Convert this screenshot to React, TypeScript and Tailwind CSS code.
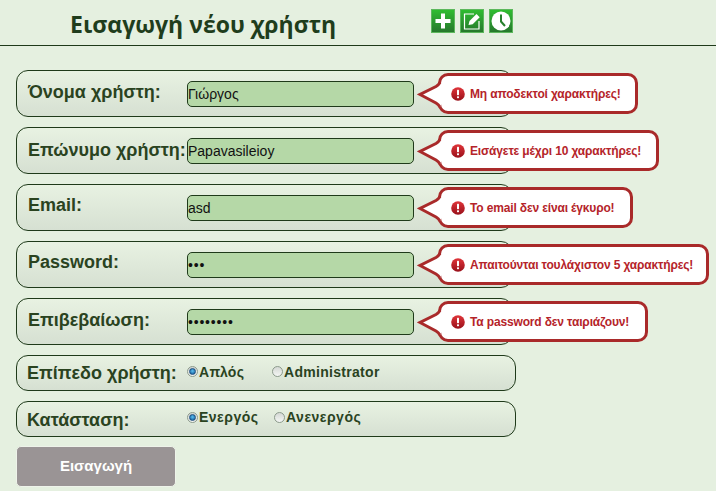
const rows = [
  { label: "Όνομα χρήστη:", value: "Γιώργος", msg: "Μη αποδεκτοί χαρακτήρες!", w: "w-[221px]", lt: "-mt-[3px]", pw: false },
  { label: "Επώνυμο χρήστη:", value: "Papavasileioy", msg: "Εισάγετε μέχρι 10 χαρακτήρες!", w: "w-[242px]", lt: "-mt-[1px]", pw: false },
  { label: "Email:", value: "asd", msg: "Το email δεν είναι έγκυρο!", w: "w-[216px]", lt: "-mt-[5px]", pw: false },
  { label: "Password:", value: "•••", msg: "Απαιτούνται τουλάχιστον 5 χαρακτήρες!", w: "w-[292px]", lt: "-mt-[5px]", pw: true },
  { label: "Επιβεβαίωση:", value: "••••••••", msg: "Τα password δεν ταιριάζουν!", w: "w-[231px]", lt: "-mt-[2px]", pw: true },
];

function Bubble({ msg, w }: { msg: string; w: string }) {
  return (
    <div className={`absolute left-[400px] top-[2px] h-[41px] ${w}`}>
      <div className="absolute left-[21px] right-0 top-0 bottom-0 flex items-center rounded-[10px] border-[3px] border-[#a92a2a] bg-white pl-[10px] text-[12px] font-bold tracking-[-0.15px] whitespace-nowrap text-[#b5242a]">
        <svg className="mr-[5px] shrink-0" width="14" height="14" viewBox="0 0 14 14">
          <defs>
            <linearGradient id="err" x1="0" y1="0" x2="0" y2="1">
              <stop offset="0" stopColor="#e0353a" />
              <stop offset="1" stopColor="#98101a" />
            </linearGradient>
          </defs>
          <circle cx="7" cy="7" r="6.8" fill="url(#err)" />
          <rect x="6" y="2.8" width="2" height="5.4" rx="0.6" fill="#fff" />
          <rect x="6" y="9.2" width="2" height="2" rx="0.6" fill="#fff" />
        </svg>
        <span>{msg}</span>
      </div>
      <svg className="absolute left-0 top-0" width="26" height="41" viewBox="0 0 26 41">
        <path d="M24 10 Q22 12 19 13.5 L3 21.5 L19 30 Q22 31.5 24 34 Z" fill="#fff" />
        <path d="M23 9.5 Q21.5 12 19 13.5 L3 21.5 L19 30 Q21.5 31.5 23 34" fill="none" stroke="#a92a2a" strokeWidth="3" />
      </svg>
    </div>
  );
}

function Radio({ checked }: { checked?: boolean }) {
  return (
    <span className="mr-px flex size-[11px] shrink-0 items-center justify-center rounded-full border border-[#8c9a8c] bg-gradient-to-b from-[#d4d8d4] to-[#f4f6f4]">
      {checked && <span className="size-[7px] rounded-full border border-[#1f4f80] bg-[radial-gradient(circle_at_50%_40%,#5cc0f0,#0a4f90)]" />}
    </span>
  );
}

function RadioLabel({ text, checked, className }: { text: string; checked?: boolean; className: string }) {
  return (
    <label className={`flex items-center text-[14px] leading-[18px] font-bold text-[#2a431f] ${className}`}>
      <Radio checked={checked} />
      {text}
    </label>
  );
}

function IconBox({ children }: { children: React.ReactNode }) {
  return (
    <div className="flex size-[24px] items-center justify-center border border-[#5cb85c] bg-gradient-to-b from-[#2fbd30] to-[#26782c]">
      {children}
    </div>
  );
}

export default function App() {
  return (
    <div className="h-[491px] w-[716px] overflow-hidden bg-[#e5f0e0] font-['Liberation_Sans',Arial,sans-serif]">
      <header className="flex h-[46px] border-b border-[#1f3a1a] pl-[70px]">
        <h1 className="w-[361px] pt-[8px] font-['Open_Sans',sans-serif] text-[23px] leading-[33px] font-bold text-[#1f3d1c]">
          Εισαγωγή νέου χρήστη
        </h1>
        <div className="flex gap-[5px] pt-[9px]">
          <IconBox>
            <svg width="18" height="18" viewBox="0 0 18 18"><path d="M7 1.5h4V7h5.5v4H11v5.5H7V11H1.5V7H7z" fill="#fff" /></svg>
          </IconBox>
          <IconBox>
            <svg width="20" height="20" viewBox="0 0 20 20">
              <path d="M12 3H2.5v15H17V10" fill="none" stroke="#fff" strokeWidth="1.2" />
              <path d="M6.5 14l1-4 7-7 3.2 3.2-7 7z" fill="#fff" />
            </svg>
          </IconBox>
          <IconBox>
            <svg width="20" height="20" viewBox="0 0 20 20">
              <circle cx="10" cy="10" r="9.5" fill="#fff" />
              <path d="M10 3.5V10.5L14 15" fill="none" stroke="#26802c" strokeWidth="2" />
            </svg>
          </IconBox>
        </div>
      </header>

      <main className="flex flex-col gap-[10px] pt-[24px] pl-[16px]">
        {rows.map((r) => (
          <div key={r.label} className="relative flex h-[47px] w-[497px] items-center rounded-[12px] border border-[#1f3a1a] bg-gradient-to-b from-[#e8f2e2] to-[#d6e0d2] pl-[11px]">
            <span className={`w-[159px] shrink-0 text-[18px] font-bold whitespace-nowrap text-[#2a431f] ${r.lt}`}>{r.label}</span>
            <input
              readOnly
              value={r.value}
              className={`h-[26px] w-[227px] rounded-[5px] border border-[#1f3a1a] bg-[#b5d8a7] text-[14px] text-[#111] outline-none ${r.pw ? "tracking-[0.8px]" : ""}`}
            />
            <Bubble msg={r.msg} w={r.w} />
          </div>
        ))}

        <div className="flex h-[36px] w-[500px] items-center rounded-[12px] border border-[#1f3a1a] bg-gradient-to-b from-[#e8f2e2] to-[#d6e0d2] pl-[10px]">
          <span className="mt-[1px] w-[160px] shrink-0 text-[18px] font-bold whitespace-nowrap text-[#2a431f]">Επίπεδο χρήστη:</span>
          <RadioLabel text="Απλός" checked className="-mt-[3px] w-[85px] tracking-[0.3px]" />
          <RadioLabel text="Administrator" className="-mt-[3px] tracking-[0.3px]" />
        </div>

        <div className="flex h-[36px] w-[500px] items-center rounded-[12px] border border-[#1f3a1a] bg-gradient-to-b from-[#e8f2e2] to-[#d6e0d2] pl-[10px]">
          <span className="mt-[3px] w-[160px] shrink-0 text-[18px] font-bold whitespace-nowrap text-[#2a431f]">Κατάσταση:</span>
          <RadioLabel text="Ενεργός" checked className="-mt-[4px] w-[87px] tracking-[0.5px]" />
          <RadioLabel text="Ανενεργός" className="-mt-[4px] tracking-[0.5px]" />
        </div>

        <button className="-mt-px h-[41px] w-[160px] rounded-[5px] border border-[#eef3ea] bg-[#9a9495] text-center text-[15px] font-bold text-white">
          Εισαγωγή
        </button>
      </main>
    </div>
  );
}
